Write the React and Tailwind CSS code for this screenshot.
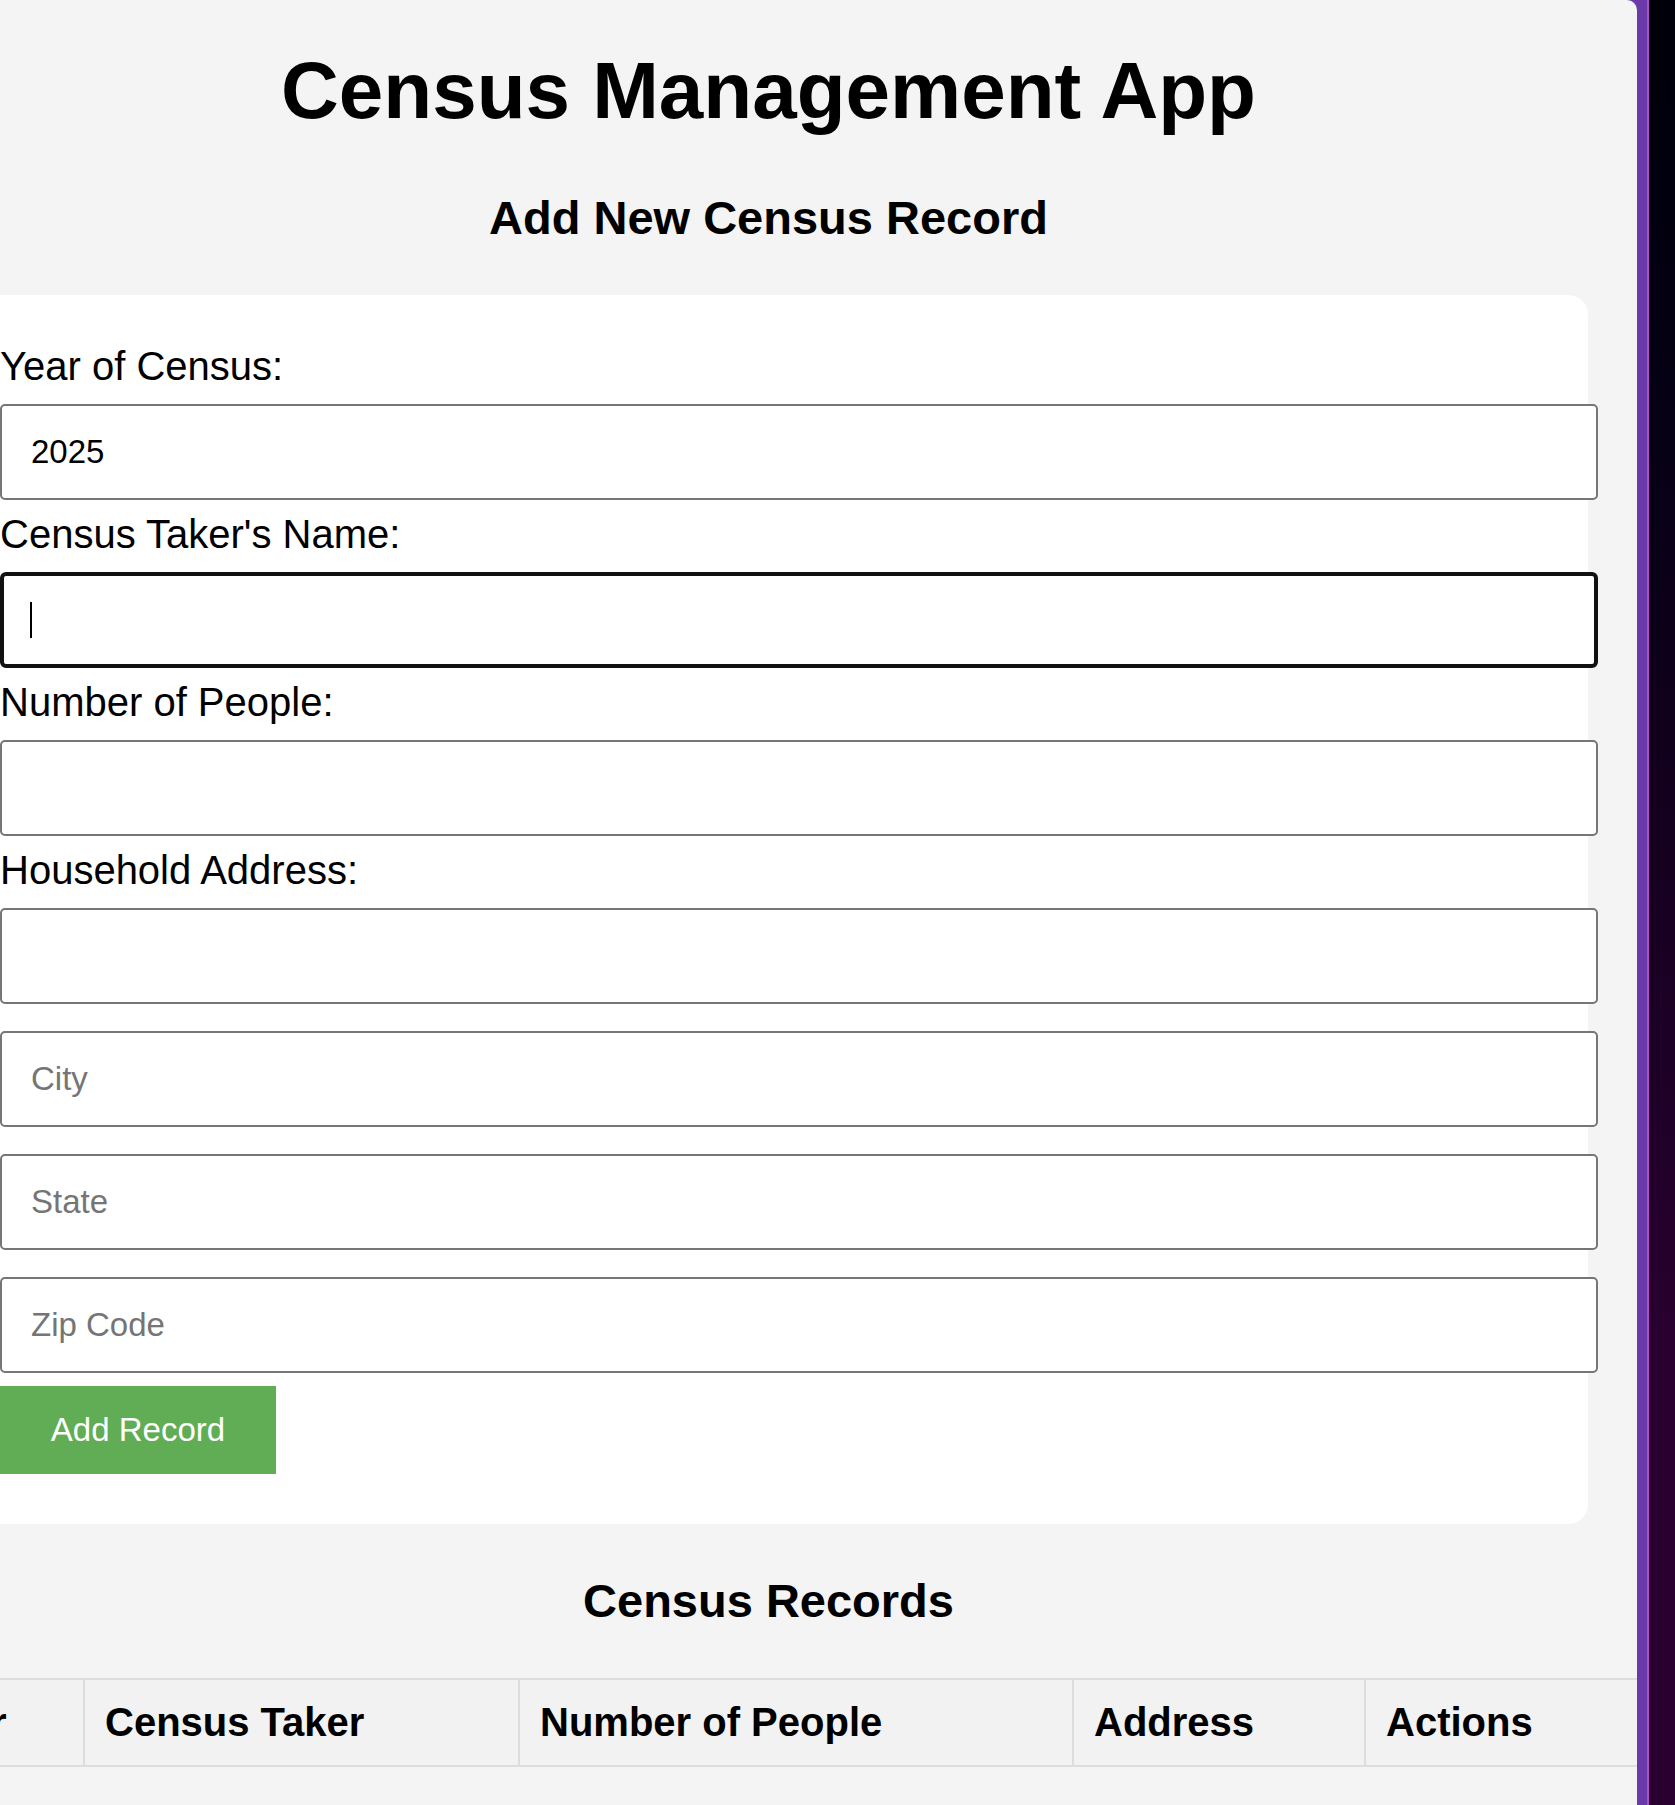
import React from 'react';

const Field = ({ label, value, focused, first }) => (
  <div className={first ? '' : 'mt-[12px]'}>
    <label className="block text-[40px] leading-[45px] mb-[15px]">{label}</label>
    <div className="relative">
      <input
        type="text"
        defaultValue={value}
        className={
          focused
            ? 'block w-[1598px] h-[96px] px-[28px] border-[4px] border-[#111111] rounded-[6px] bg-white text-[33px] outline-none'
            : 'block w-[1598px] h-[96px] px-[29px] border-2 border-[#767676] rounded-[5px] bg-white text-[33px] outline-none'
        }
      />
      {/* caret of the focused field */}
      {focused && <span className="absolute left-[30px] top-[30px] w-[2px] h-[36px] bg-black" />}
    </div>
  </div>
);

const Extra = ({ placeholder }) => (
  <input
    type="text"
    placeholder={placeholder}
    className="block mt-[27px] w-[1598px] h-[96px] px-[29px] border-2 border-[#767676] rounded-[5px] bg-white text-[33px] outline-none placeholder:text-[#757575]"
  />
);

const columns = [
  { name: 'Year', width: 'w-[183px]' },
  { name: 'Census Taker', width: 'w-[435px]' },
  { name: 'Number of People', width: 'w-[554px]' },
  { name: 'Address', width: 'w-[292px]' },
  { name: 'Actions', width: 'w-[334px]' },
];

const App = () => {
  return (
    <div className="flex w-[1675px] min-h-[1805px] bg-[#6b3aa9] font-['Liberation_Sans',Arial,sans-serif] text-black">
      {/* Main page */}
      <main className="w-[1637px] shrink-0 overflow-hidden bg-[#f4f4f4] rounded-tr-[10px]">
        <div className="ml-[-51px] w-[1639px]">
          <h1 className="mt-[45px] text-center text-[80px] leading-[92px] font-bold">Census Management App</h1>
          <h2 className="mt-[54px] text-center text-[47px] leading-[53px] font-bold">Add New Census Record</h2>

          {/* Form card */}
          <div className="mt-[51px] bg-white rounded-[20px] pl-[51px] pt-[49px] pb-[50px]">
            <Field first label="Year of Census:" value="2025" />
            <Field focused label="Census Taker's Name:" value="" />
            <Field label="Number of People:" value="" />
            <Field label="Household Address:" value="" />
            <Extra placeholder="City" />
            <Extra placeholder="State" />
            <Extra placeholder="Zip Code" />
            <button className="block mt-[13px] w-[276px] h-[88px] bg-[#61ad55] text-white text-[33px]">
              Add Record
            </button>
          </div>

          <h2 className="mt-[50px] text-center text-[47px] leading-[53px] font-bold">Census Records</h2>
        </div>

        {/* Records table header */}
        <div className="mt-[51px] ml-[-98px] flex w-[1800px] border-y-2 border-[#dddddd]">
          {columns.map((col) => (
            <div
              key={col.name}
              className={`${col.width} shrink-0 bg-[#f2f2f2] border-r-2 border-[#dddddd] px-[20px] py-[20px] text-[40px] leading-[45px] font-bold whitespace-nowrap`}
            >
              {col.name}
            </div>
          ))}
        </div>
      </main>

      {/* Right frame strip */}
      <div className="w-[10px] shrink-0 bg-[#6b3aa9]" />
      <div className="w-[2px] shrink-0 bg-[#b44cc8]" />
      <div className="flex-1 bg-linear-to-b from-[#00000a] via-[#10001c] via-40% to-[#2a0030] to-75%" />
    </div>
  );
};

export default App;
